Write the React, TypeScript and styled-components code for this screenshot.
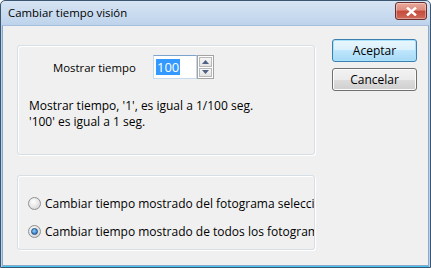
import React from "react";
import styled, { createGlobalStyle } from "styled-components";

const Global = createGlobalStyle`
  html, body { margin: 0; padding: 0; background: #fff; }
  body { width: 431px; height: 268px; overflow: hidden; }
`;

const Window = styled.div`
  box-sizing: border-box;
  width: 431px;
  height: 268px;
  display: flex;
  flex-direction: column;
  border: 1px solid #3b5670;
  border-radius: 5px 5px 0 0;
  background: linear-gradient(#d6e4f3, #bcd2eb 26px, #b9d1ea);
  font-family: "Open Sans", "Noto Sans", sans-serif;
  font-size: 11.4px;
  color: #000;
`;

const TitleBar = styled.div`
  height: 24px;
  display: flex;
  align-items: center;
  justify-content: space-between;
  padding: 0 3px 0 7px;
  font-size: 11.4px;
  color: #000;
`;

const TitleText = styled.span`
  margin-top: -2px;
`;

const CloseBtn = styled.div`
  box-sizing: border-box;
  width: 32px;
  height: 18px;
  margin-top: -4px;
  border: 1px solid #6b2e2e;
  border-radius: 3px;
  background: linear-gradient(#e9a99b 0%, #dd8a7c 45%, #c4493a 50%, #cf6b5c 100%);
  box-shadow: inset 0 0 0 1px rgba(255, 255, 255, 0.35);
  display: flex;
  align-items: center;
  justify-content: center;
`;

const Client = styled.div`
  flex: 1;
  margin: 0 1px 1px 1px;
  border: 1px solid #8ba9c9;
  border-top-color: #a6c0dc;
  background: #f0f0f0;
  display: flex;
  padding: 13px 12px 14px 14px;
  gap: 17px;
  box-shadow: 0 1px 0 #45c3ef;
`;

const LeftCol = styled.div`
  width: 298px;
  display: flex;
  flex-direction: column;
  gap: 20px;
  margin-top: 6px;
`;

const GroupBox = styled.div<{ $h: number }>`
  box-sizing: border-box;
  height: ${(p) => p.$h}px;
  border: 1px solid #d5dfe5;
  border-radius: 3px;
  box-shadow: inset 1px 1px 0 #fff, 1px 1px 0 #fff;
  overflow: hidden;
`;

const TimeRow = styled.div`
  display: flex;
  align-items: center;
  margin: 9px 0 0 35px;
  height: 24px;
`;

const Label = styled.span`
  width: 100px;
`;

const Spin = styled.div`
  display: flex;
  height: 24px;
`;

const TextField = styled.div`
  box-sizing: border-box;
  width: 44px;
  height: 24px;
  border: 1px solid #c5daed;
  border-top-color: #7da2ce;
  background: #fff;
  padding: 3px 0 0 2px;
`;

const Sel = styled.span`
  background: #3399ff;
  color: #fff;
  font-size: 13px;
  line-height: 16px;
  display: inline-block;
  padding: 0 1px;
`;

const SpinButtons = styled.div`
  box-sizing: border-box;
  width: 17px;
  height: 24px;
  border: 1px solid #a3a3a3;
  background: #fff;
  display: flex;
  flex-direction: column;
  gap: 1px;
  padding: 1px;
`;

const SpinBtn = styled.div`
  flex: 1;
  border: 1px solid #b8b8b8;
  background: linear-gradient(#f6f6f6, #e3e3e3);
  display: flex;
  align-items: center;
  justify-content: center;
`;

const Info = styled.div`
  margin: 19px 0 0 11px;
  font-size: 12px;
`;

const InfoLine = styled.div`
  line-height: 16px;
`;

const RadioList = styled.div`
  display: flex;
  flex-direction: column;
  gap: 12px;
  margin: 19px 0 0 10px;
`;

const RadioRow = styled.div`
  display: flex;
  align-items: center;
  gap: 4px;
  height: 16px;
  white-space: nowrap;
  font-size: 12px;
`;

const RadioCircle = styled.div<{ $on?: boolean }>`
  box-sizing: border-box;
  flex: none;
  width: 13px;
  height: 13px;
  border-radius: 50%;
  border: 1px solid #8e8f8f;
  background: radial-gradient(circle at 40% 35%, #ffffff, #dcdcdc 70%, #c9c9c9);
  display: flex;
  align-items: center;
  justify-content: center;
  &::after {
    content: "";
    display: ${(p) => (p.$on ? "block" : "none")};
    width: 5px;
    height: 5px;
    border-radius: 50%;
    background: radial-gradient(circle at 40% 35%, #8fd0ff, #1a5fa8);
    border: 1px solid #1c4f86;
  }
`;

const RightCol = styled.div`
  display: flex;
  flex-direction: column;
  gap: 6px;
`;

const Button = styled.div<{ $def?: boolean }>`
  box-sizing: border-box;
  width: 85px;
  height: 23px;
  border: 1px solid ${(p) => (p.$def ? "#3c7fb1" : "#707070")};
  border-radius: 3px;
  background: ${(p) =>
    p.$def
      ? "linear-gradient(#eaf6fd 0%, #d9f0fc 50%, #bee6fd 50%, #a7d9f5 100%)"
      : "linear-gradient(#f2f2f2 0%, #ebebeb 50%, #dddddd 50%, #cfcfcf 100%)"};
  box-shadow: inset 0 0 0 1px ${(p) => (p.$def ? "#a8e3fb" : "#fcfcfc")};
  display: flex;
  align-items: center;
  justify-content: center;
  font-size: 12px;
`;

const Arrow = ({ up }: { up?: boolean }) => (
  <svg width="7" height="4" viewBox="0 0 7 4">
    <path d={up ? "M0 4 L3.5 0 L7 4 Z" : "M0 0 L3.5 4 L7 0 Z"} fill="#4d6185" />
  </svg>
);

export default function App() {
  return (
    <>
      <Global />
      <Window>
        <TitleBar>
          <TitleText>Cambiar tiempo visión</TitleText>
          <CloseBtn>
            <svg width="11" height="9" viewBox="0 0 11 9">
              <path d="M1 0.5 L10 8.5 M10 0.5 L1 8.5" stroke="#fff" strokeWidth="2.4" fill="none" />
            </svg>
          </CloseBtn>
        </TitleBar>
        <Client>
          <LeftCol>
            <GroupBox $h={110}>
              <TimeRow>
                <Label>Mostrar tiempo</Label>
                <Spin>
                  <TextField>
                    <Sel>100</Sel>
                  </TextField>
                  <SpinButtons>
                    <SpinBtn>
                      <Arrow up />
                    </SpinBtn>
                    <SpinBtn>
                      <Arrow />
                    </SpinBtn>
                  </SpinButtons>
                </Spin>
              </TimeRow>
              <Info>
                <InfoLine>Mostrar tiempo, '1', es igual a 1/100 seg.</InfoLine>
                <InfoLine>'100' es igual a 1 seg.</InfoLine>
              </Info>
            </GroupBox>
            <GroupBox $h={75}>
              <RadioList>
                <RadioRow>
                  <RadioCircle />
                  <span>Cambiar tiempo mostrado del fotograma seleccionado</span>
                </RadioRow>
                <RadioRow>
                  <RadioCircle $on />
                  <span>Cambiar tiempo mostrado de todos los fotogramas</span>
                </RadioRow>
              </RadioList>
            </GroupBox>
          </LeftCol>
          <RightCol>
            <Button $def>Aceptar</Button>
            <Button>Cancelar</Button>
          </RightCol>
        </Client>
      </Window>
    </>
  );
}
